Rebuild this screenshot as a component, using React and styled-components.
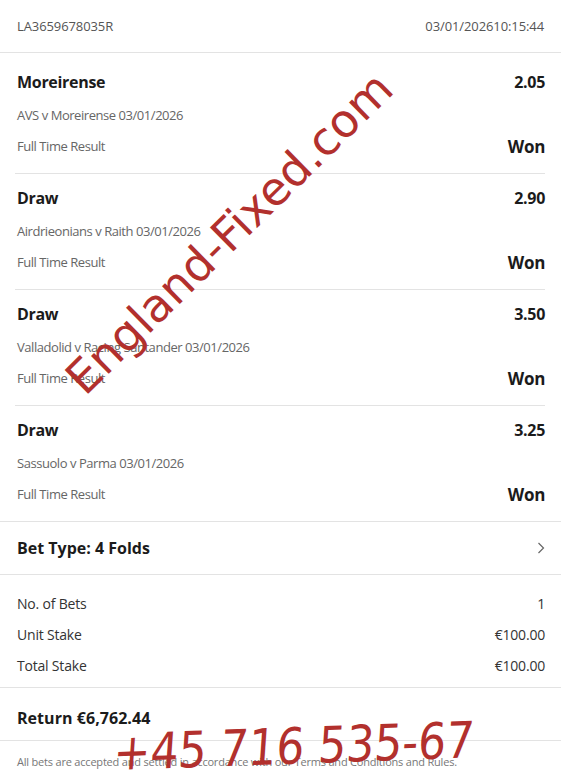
import React from "react";
import styled, { createGlobalStyle } from "styled-components";

const Global = createGlobalStyle`
  html, body { margin: 0; padding: 0; background: #fff; }
  body { font-family: "Open Sans", "Noto Sans", sans-serif; -webkit-font-smoothing: antialiased; }
`;

const Page = styled.div`
  position: relative;
  width: 561px;
  height: 780px;
  overflow: hidden;
  background: #fff;
  color: #1b1b1b;
`;

const Header = styled.div`
  height: 52px;
  display: flex;
  align-items: center;
  justify-content: space-between;
  padding: 0 17px;
  border-bottom: 1px solid #e3e3e3;
  font-size: 13px;
  color: #555;
  letter-spacing: -0.1px;
`;

const Selections = styled.div`
  padding: 0 16px 0 15px;
`;

const Selection = styled.div`
  padding: ${(p) => (p.$first ? "19px" : "14px")} 0 17px 2px;
  border-bottom: ${(p) => (p.$last ? "none" : "1px solid #e3e3e3")};
  display: flex;
  flex-direction: column;
`;

const Row = styled.div`
  display: flex;
  justify-content: space-between;
  align-items: center;
  height: ${(p) => p.$h || 20}px;
  margin-top: ${(p) => p.$mt || 0}px;
`;

const Title = styled.span`
  font-size: 16px;
  font-weight: 700;
  color: #1b1b1b;
  letter-spacing: ${(p) => (p.$ls != null ? p.$ls : -0.3)}px;
`;

const Sub = styled.span`
  font-size: 13px;
  color: #666;
  letter-spacing: -0.45px;
`;

const Won = styled.span`
  font-size: 17px;
  font-weight: 700;
  color: #1b1b1b;
  letter-spacing: -0.3px;
`;

const BetType = styled.div`
  height: 52px;
  display: flex;
  align-items: center;
  justify-content: space-between;
  padding: 0 16px 0 17px;
  border-top: 1px solid #e3e3e3;
  border-bottom: 1px solid #e3e3e3;
`;

const Summary = styled.div`
  padding: 13px 16px 6px 17px;
  border-bottom: 1px solid #e3e3e3;
`;

const SumRow = styled.div`
  height: 31px;
  display: flex;
  align-items: center;
  justify-content: space-between;
  font-size: 14px;
  color: #333;
  letter-spacing: -0.2px;
`;

const Return = styled.div`
  padding: 20px 17px 12px;
  height: 20px;
  display: flex;
  align-items: center;
  border-bottom: 1px solid #e3e3e3;
`;

const Footer = styled.div`
  padding: 13px 17px;
  font-size: 11px;
  color: #777;
  letter-spacing: -0.2px;
`;

const Mark = styled.div`
  position: absolute;
  left: ${(p) => p.$x}px;
  top: ${(p) => p.$y}px;
  transform-origin: left bottom;
  transform: ${(p) => p.$t};
  font-family: "DejaVu Sans", sans-serif;
  font-size: ${(p) => p.$size}px;
  color: #b2302d;
  white-space: nowrap;
  line-height: 1;
  pointer-events: none;
`;

const Chevron = () => (
  <svg width="8" height="12" viewBox="0 0 8 12" fill="none">
    <path d="M1.5 1 L6.5 6 L1.5 11" stroke="#666" strokeWidth="1.2" />
  </svg>
);

const sels = [
  { t: "Moreirense", o: "2.05", e: "AVS v Moreirense 03/01/2026" },
  { t: "Draw", o: "2.90", e: "Airdrieonians v Raith 03/01/2026" },
  { t: "Draw", o: "3.50", e: "Valladolid v Racing Santander 03/01/2026" },
  { t: "Draw", o: "3.25", e: "Sassuolo v Parma 03/01/2026" },
];

export default function App() {
  return (
    <Page>
      <Global />
      <Header>
        <span>LA3659678035R</span>
        <span>03/01/202610:15:44</span>
      </Header>
      <Selections>
        {sels.map((s, i) => (
          <Selection key={i} $first={i === 0} $last={i === sels.length - 1}>
            <Row>
              <Title>{s.t}</Title>
              <Title>{s.o}</Title>
            </Row>
            <Row $h={18} $mt={14}>
              <Sub>{s.e}</Sub>
            </Row>
            <Row $mt={12}>
              <Sub>Full Time Result</Sub>
              <Won>Won</Won>
            </Row>
          </Selection>
        ))}
      </Selections>
      <BetType>
        <Title $ls={0}>Bet Type: 4 Folds</Title>
        <Chevron />
      </BetType>
      <Summary>
        <SumRow><span>No. of Bets</span><span>1</span></SumRow>
        <SumRow><span>Unit Stake</span><span>€100.00</span></SumRow>
        <SumRow><span>Total Stake</span><span>€100.00</span></SumRow>
      </Summary>
      <Return>
        <Title $ls={0.05}>Return €6,762.44</Title>
      </Return>
      <Footer>All bets are accepted and settled in accordance with our Terms and Conditions and Rules.</Footer>
      <Mark $x={90} $y={356} $size={46} $t="rotate(-44.5deg)">England-Fixed.com</Mark>
      <Mark $x={112} $y={728} $size={50} $t="rotate(-2deg) skewX(-6deg) scaleX(0.88)">+45 716 535-67</Mark>
    </Page>
  );
}
